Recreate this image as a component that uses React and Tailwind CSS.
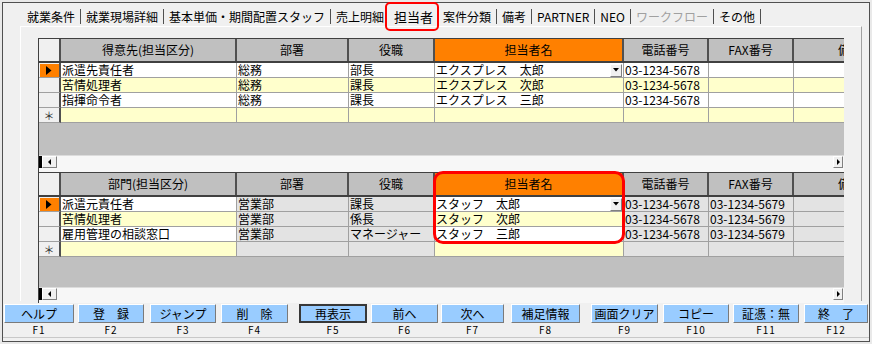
import React from "react";

const widths = [
  "w-[176px]",
  "w-[112px]",
  "w-[86px]",
  "w-[189px]",
  "w-[85px]",
  "w-[85px]",
  "w-[112px]",
];

const tabs = [
  { label: "就業条件" },
  { label: "就業現場詳細" },
  { label: "基本単価・期間配置スタッフ" },
  { label: "売上明細" },
  { label: "担当者", active: true },
  { label: "案件分類" },
  { label: "備考" },
  { label: "PARTNER" },
  { label: "NEO" },
  { label: "ワークフロー", disabled: true },
  { label: "その他" },
];

const buttons = [
  { label: "ヘルプ", key: "F1", cls: "ml-[1px] w-[70px]" },
  { label: "登　録", key: "F2", cls: "ml-[4px] w-[66px]" },
  { label: "ジャンプ", key: "F3", cls: "ml-[6px] w-[66px]" },
  { label: "削　除", key: "F4", cls: "ml-[5px] w-[67px]" },
  { label: "再表示", key: "F5", cls: "ml-[11px] w-[68px]", focus: true },
  { label: "前へ", key: "F6", cls: "ml-[4px] w-[67px]" },
  { label: "次へ", key: "F7", cls: "ml-[3px] w-[63px]" },
  { label: "補足情報", key: "F8", cls: "ml-[7px] w-[69px]" },
  { label: "画面クリア", key: "F9", cls: "ml-[11px] w-[67px]" },
  { label: "コピー", key: "F10", cls: "ml-[5px] w-[66px]" },
  { label: "証憑：無", key: "F11", cls: "ml-[4px] w-[66px]" },
  { label: "終　了", key: "F12", cls: "ml-[5px] w-[64px]" },
];

const grid1 = {
  headers: ["得意先(担当区分)", "部署", "役職", "担当者名", "電話番号", "FAX番号", "備考"],
  rows: [
    ["派遣先責任者", "総務", "部長", "エクスプレス　太郎", "03-1234-5678", "", ""],
    ["苦情処理者", "総務", "課長", "エクスプレス　次郎", "03-1234-5678", "", ""],
    ["指揮命令者", "総務", "課長", "エクスプレス　三郎", "03-1234-5678", "", ""],
  ],
  locked: [],
};

const grid2 = {
  headers: ["部門(担当区分)", "部署", "役職", "担当者名", "電話番号", "FAX番号", "備考"],
  rows: [
    ["派遣元責任者", "営業部", "課長", "スタッフ　太郎", "03-1234-5678", "03-1234-5679", ""],
    ["苦情処理者", "営業部", "係長", "スタッフ　次郎", "03-1234-5678", "03-1234-5679", ""],
    ["雇用管理の相談窓口", "営業部", "マネージャー", "スタッフ　三郎", "03-1234-5678", "03-1234-5679", ""],
  ],
  locked: [1, 2, 4, 5, 6],
};

function DropButton() {
  return (
    <div className="mr-[1px] flex h-[13px] w-[12px] shrink-0 items-center justify-center border border-b-[#808080] border-l-white border-r-[#808080] border-t-white bg-[#f0f0f0]">
      <svg width="6" height="4" viewBox="0 0 6 4">
        <path d="M0 0h6L3 3.5z" fill="#000" />
      </svg>
    </div>
  );
}

function Selector({ kind }) {
  return (
    <div className="flex h-[15px] w-[22px] shrink-0 items-center justify-center border-b border-r-2 border-b-[#a0a0a0] border-r-[#505050] bg-[#f0f0f0]">
      {kind === "current" && (
        <div className="flex h-[13px] w-[19px] items-center justify-center bg-[#ff8000]">
          <svg width="6" height="9" viewBox="0 0 6 9">
            <path d="M0 0l5.5 4.5L0 9z" fill="#000" />
          </svg>
        </div>
      )}
      {kind === "new" && (
        <span className="text-[11px] leading-[13px] text-[#303030]">＊</span>
      )}
    </div>
  );
}

function Scrollbar({ height }) {
  return (
    <div className={`flex ${height} items-start border-t border-[#dcdcdc] bg-[#f7f7f7]`}>
      <div className="h-[12px] w-[3px] bg-black" />
      <div className="flex h-[12px] w-[15px] items-center justify-center border border-b-[#808080] border-l-white border-r-[#808080] border-t-white bg-[#f0f0f0]">
        <svg width="3" height="6" viewBox="0 0 3 6">
          <path d="M3 0v6L0 3z" fill="#000" />
        </svg>
      </div>
      <div className="ml-[776px] flex h-[12px] w-[10px] items-center justify-center border border-b-[#808080] border-l-white border-r-[#808080] border-t-white bg-[#f0f0f0]">
        <svg width="3" height="6" viewBox="0 0 3 6">
          <path d="M0 0v6l3-3z" fill="#000" />
        </svg>
      </div>
    </div>
  );
}

function Grid({ data, grayHeight, scrollHeight, children }) {
  const cellBg = (r, c) => {
    if (data.locked.includes(c)) return "bg-[#e3e3e3]";
    return r % 2 === 0 ? "bg-white" : "bg-[#ffffcc]";
  };
  const allRows = [...data.rows, ["", "", "", "", "", "", ""]];

  return (
    <div className="relative w-[806px] border-l border-t border-[#404040]">
      <div className="overflow-hidden">
        <div className="flex h-[24px] w-[900px] border-b-2 border-[#404040]">
          <div className="w-[22px] shrink-0 border-r-2 border-[#505050] bg-[#f0f0f0]" />
          {data.headers.map((h, i) => (
            <div
              key={i}
              className={`${widths[i]} flex shrink-0 items-center justify-center text-[12px] leading-[16px] ${
                i === 3 ? "bg-[#ff8000]" : "bg-[#c0c0c0]"
              } ${i < 6 ? "border-r-2 border-[#505050]" : ""}`}
            >
              {h}
            </div>
          ))}
        </div>
        {allRows.map((row, r) => (
          <div key={r} className="flex h-[15px] w-[900px]">
            <Selector kind={r === 0 ? "current" : r === allRows.length - 1 ? "new" : ""} />
            {row.map((v, c) => (
              <div
                key={c}
                className={`${widths[c]} ${cellBg(r, c)} flex h-[15px] shrink-0 items-center justify-between overflow-hidden whitespace-nowrap border-b border-r border-[#a0a0a0] pl-[1px] text-[12px] leading-[14px]`}
              >
                <span className="leading-[14px]">{v}</span>
                {r === 0 && c === 3 && <DropButton />}
              </div>
            ))}
          </div>
        ))}
      </div>
      <div className={`${grayHeight} bg-[#c0c0c0]`} />
      <Scrollbar height={scrollHeight} />
      {children}
    </div>
  );
}

export default function App() {
  return (
    <div className="h-[344px] w-[872px] bg-[#e9e9e9] p-[2px] font-[family-name:'Noto_Sans_CJK_JP',sans-serif] text-black">
      <div className="h-[340px] w-[868px] border border-[#505050] bg-[#f0f0f0]">
        {/* タブ */}
        <div className="flex h-[23px] items-center pl-[24px] pt-[4px] text-[12px]">
          {tabs.map((t, i) => (
            <React.Fragment key={t.label}>
              {i > 0 && !t.active && !tabs[i - 1].active && (
                <span className="mx-[5px] h-[15px] w-px bg-[#505050]" />
              )}
              {t.active ? (
                <span className="relative mx-[10px] text-[13px] leading-[16px]">
                  {t.label}
                  <span className="absolute -bottom-[6px] -left-[9px] -right-[6px] -top-[7px] rounded-[5px] border-2 border-[#ff0000]" />
                </span>
              ) : (
                <span className={`leading-[16px] ${t.disabled ? "text-[#a0a0a0]" : ""}`}>{t.label}</span>
              )}
            </React.Fragment>
          ))}
          <span className="mx-[5px] h-[15px] w-px bg-[#505050]" />
        </div>

        {/* パネル */}
        <div className="ml-[17px] h-[275px] w-[842px] border-l border-r border-t border-l-white border-r-[#a0a0a0] border-t-white pl-[17px] pt-[11px]">
          <Grid data={grid1} grayHeight="h-[32px]" scrollHeight="h-[17px]" />
          <Grid data={grid2} grayHeight="h-[30px]" scrollHeight="h-[16px]">
            <div className="pointer-events-none absolute left-[394px] top-[-2px] h-[73px] w-[192px] rounded-[10px] border-[3px] border-[#ff0000]" />
          </Grid>
        </div>

        {/* ファンクションキー */}
        <div className="mt-[3px] flex border-b border-[#c8c8c8] pb-[1px]">
          {buttons.map((b) => (
            <div key={b.key} className={`${b.cls} flex shrink-0 flex-col items-center`}>
              <div
                className={`flex h-[19px] w-full items-center justify-center bg-[#99ccff] text-[12px] leading-[15px] ${
                  b.focus
                    ? "border-2 border-[#383838]"
                    : "border border-b-[#7a7a7a] border-l-white border-r-[#7a7a7a] border-t-white"
                }`}
              >
                {b.label}
              </div>
              <div className="h-[13px] pt-[1px] text-[10px] leading-[12px] tracking-[1px]">{b.key}</div>
            </div>
          ))}
        </div>
      </div>
    </div>
  );
}
